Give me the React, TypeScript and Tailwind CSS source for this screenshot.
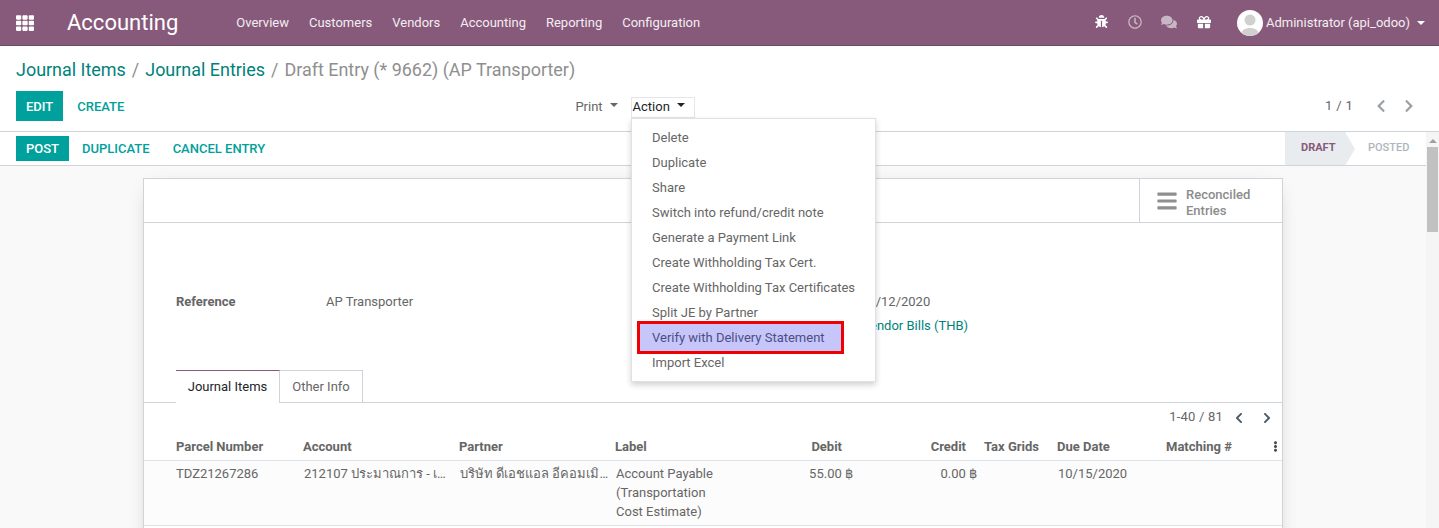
import { FaBars, FaBug, FaChevronLeft, FaChevronRight, FaComments, FaEllipsisV, FaGift, FaRegClock, FaTh } from 'react-icons/fa'

const navLinks = ['Overview', 'Customers', 'Vendors', 'Accounting', 'Reporting', 'Configuration']

const actions = [
  'Delete',
  'Duplicate',
  'Share',
  'Switch into refund/credit note',
  'Generate a Payment Link',
  'Create Withholding Tax Cert.',
  'Create Withholding Tax Certificates',
  'Split JE by Partner',
  'Verify with Delivery Statement',
  'Import Excel',
]

function Caret({ className }: { className: string }) {
  return <span className={`inline-block h-0 w-0 border-x-[4px] border-t-[4px] border-x-transparent ${className}`} />
}

function Navbar() {
  return (
    <header className="flex h-[46px] shrink-0 items-center border-b border-[#6f4a65] bg-[#875a7b] text-white">
      <FaTh className="ml-[16px] h-[18px] w-[18px]" />
      <span className="ml-[33px] text-[22px] leading-none">Accounting</span>
      <nav className="ml-[58px] flex gap-[20px] text-[13px] text-[#f3edf1]">
        {navLinks.map((link) => (
          <span key={link}>{link}</span>
        ))}
      </nav>
      <div className="ml-auto flex items-center">
        <FaBug className="-mt-[2px] h-[13px] w-[13px]" />
        <FaRegClock className="-mt-[2px] ml-[20px] h-[14px] w-[14px] text-[#c9b6c4]" />
        <FaComments className="-mt-[2px] ml-[19px] h-[16px] w-[16px] text-[#c9b6c4]" />
        <FaGift className="-mt-[2px] ml-[20px] h-[14px] w-[14px]" />
        <span className="ml-[26px] flex h-[26px] w-[26px] items-end justify-center overflow-hidden rounded-full bg-white">
          <svg viewBox="0 0 26 26" className="h-[26px] w-[26px]">
            <circle cx="13" cy="10" r="5.5" fill="#d0d0d0" />
            <path d="M4 26c0-6 4-8 9-8s9 2 9 8z" fill="#d0d0d0" />
          </svg>
        </span>
        <span className="ml-[3px] text-[13px] text-[#f3edf1]">Administrator (api_odoo)</span>
        <Caret className="ml-[7px] mr-[14px] border-t-white" />
      </div>
    </header>
  )
}

function ActionMenu() {
  return (
    <div className="absolute left-[631px] top-[118px] z-20 w-[245px] border border-[#dee2e6] bg-white py-[6px] shadow-[0_3px_6px_rgba(0,0,0,0.18)]">
      {actions.map((item) => {
        const active = item === 'Verify with Delivery Statement'
        return (
          <div key={item} className="relative h-[25px] whitespace-nowrap px-[20px] text-[13px] leading-[25px] text-[#666666]">
            {active && (
              <span className="absolute inset-y-[-4px] left-[5px] w-[207px] border-[3px] border-[#f00000] bg-[#c6c6fb]" />
            )}
            <span className={active ? 'relative text-[#4d4d84]' : 'relative'}>{item}</span>
          </div>
        )
      })}
    </div>
  )
}

function ControlPanel() {
  return (
    <section className="h-[86px] shrink-0 border-b border-[#ced4da] bg-white px-[16px]">
      <div className="flex h-[37px] items-end gap-[6px] text-[17.95px] leading-[27px] text-[#8f8f8f]">
        <span className="text-[#00827c]">Journal Items</span>
        <span>/</span>
        <span className="text-[#00827c]">Journal Entries</span>
        <span>/</span>
        <span>Draft Entry (* 9662) (AP Transporter)</span>
      </div>
      <div className="flex items-center pt-[8px] text-[13px]">
        <span className="bg-[#00a09d] px-[10px] pb-[6px] pt-[8px] font-medium leading-[16px] text-white">EDIT</span>
        <span className="ml-[14px] mt-[2px] font-medium text-[#00a09d]">CREATE</span>
        <div className="ml-[451px] mt-[2px] flex items-center text-[#666666]">
          <span>Print</span>
          <Caret className="ml-[7px] -translate-y-[2px] border-t-[#666666]" />
        </div>
        <div className="ml-[13px] mt-[2px] flex h-[21px] w-[64px] items-center border border-[#e4e7ea] pl-[1px] text-[#212529]">
          <span>Action</span>
          <Caret className="ml-[7px] -translate-y-[2px] border-t-[#212529]" />
        </div>
        <span className="ml-auto tracking-[0.3px] text-[#666666]">1 / 1</span>
        <FaChevronLeft className="ml-[21px] h-[14px] w-[14px] text-[#9aa0a6]" />
        <FaChevronRight className="ml-[14px] mr-[7px] h-[14px] w-[14px] text-[#9aa0a6]" />
      </div>
    </section>
  )
}

function StatusBar() {
  return (
    <section className="flex h-[34px] shrink-0 items-center border-b border-[#ced4da] bg-white pl-[16px] text-[13px] font-medium">
      <span className="bg-[#00a09d] px-[10px] py-[5px] leading-[15px] text-white">POST</span>
      <span className="ml-[13px] text-[#00a09d]">DUPLICATE</span>
      <span className="ml-[23px] text-[#00a09d]">CANCEL ENTRY</span>
      <div className="ml-auto flex h-full items-center text-[11px]">
        <div className="relative flex h-full w-[61px] items-center bg-[#e9ecef] pl-[16px] text-[#875a7b]">
          <span className="font-bold">DRAFT</span>
          <span className="absolute left-[60px] top-0 h-0 w-0 border-y-[17px] border-l-[10px] border-y-transparent border-l-[#e9ecef]" />
        </div>
        <span className="w-[80px] pl-[22px] text-[#adb5bd]">POSTED</span>
      </div>
    </section>
  )
}

const thClass = 'border-b border-[#dee2e6] pb-[3px] text-[13px] font-bold text-[#666666]'

function JournalTable() {
  return (
    <table className="w-full table-fixed border-collapse text-[13px] text-[#666666]">
      <colgroup>
        <col className="w-[159px]" />
        <col className="w-[156px]" />
        <col className="w-[156px]" />
        <col className="w-[150px]" />
        <col className="w-[77px]" />
        <col className="w-[124px]" />
        <col className="w-[91px]" />
        <col className="w-[109px]" />
        <col className="w-[104px]" />
        <col />
      </colgroup>
      <thead>
        <tr>
          <th className={`${thClass} pl-[32px] text-left`}>Parcel Number</th>
          <th className={`${thClass} text-left`}>Account</th>
          <th className={`${thClass} text-left`}>Partner</th>
          <th className={`${thClass} text-left`}>Label</th>
          <th className={`${thClass} text-right`}>Debit</th>
          <th className={`${thClass} text-right`}>Credit</th>
          <th className={`${thClass} pl-[18px] text-left`}>Tax Grids</th>
          <th className={`${thClass} text-left`}>Due Date</th>
          <th className={`${thClass} text-left`}>Matching #</th>
          <th className={thClass}>
            <FaEllipsisV className="h-[11px] w-[11px] text-[#4c4c4c]" />
          </th>
        </tr>
      </thead>
      <tbody>
        <tr className="h-[65px] border-b border-[#dee2e6] bg-[#fcfcfc] align-top leading-[19px]">
          <td className="pl-[32px] pt-[3px]">TDZ21267286</td>
          <td className="truncate pl-[1px] pr-[12px] pt-[3px]">212107 ประมาณการ - เจ้าหนี้</td>
          <td className="truncate pl-[1px] pr-[3px] pt-[3px]">บริษัท ดีเอชแอล อีคอมเมิร์ซ</td>
          <td className="pl-[1px] pt-[3px]">
            Account Payable
            <br />
            (Transportation
            <br />
            Cost Estimate)
          </td>
          <td className="pt-[3px] text-right">
            <span className="-mr-[11px] inline-block">55.00 ฿</span>
          </td>
          <td className="pt-[3px] text-right">
            <span className="-mr-[11px] inline-block">0.00 ฿</span>
          </td>
          <td />
          <td className="pl-[1px] pt-[3px]">10/15/2020</td>
          <td />
          <td />
        </tr>
      </tbody>
    </table>
  )
}

function FormSheet() {
  return (
    <div className="ml-[143px] mt-[12px] w-[1140px] border border-[#ced4da] bg-white pb-[40px] shadow-[0_5px_20px_-10px_rgba(0,0,0,0.35)]">
      <div className="flex h-[44px] justify-end border-b border-[#ced4da]">
        <div className="flex w-[143px] items-center border-l border-[#ced4da] pl-[17px] text-[13px] leading-[16px] text-[#8c8c8c]">
          <FaBars className="h-[22px] w-[20px] text-[#8f8f8f]" />
          <span className="ml-[9px] mt-[4px] font-medium">
            Reconciled
            <br />
            Entries
          </span>
        </div>
      </div>

      <div className="h-[147px] text-[13px] text-[#666666]">
        <div className="flex pl-[32px] pt-[69px]">
          <span className="w-[150px] font-bold">Reference</span>
          <span>AP Transporter</span>
          <div className="ml-[449px] flex flex-col gap-[5px] leading-[19px]">
            <span className="-ml-px">10/12/2020</span>
            <span className="text-[#00827c]">Vendor Bills (THB)</span>
          </div>
        </div>
      </div>

      <div className="flex h-[33px] items-end border-b border-[#ced4da] pl-[32px] text-[13px]">
        <span className="-mb-px flex h-[33px] w-[104px] items-center justify-center border-t border-t-[#875a7b] border-r border-r-[#ced4da] bg-white text-[#212529]">
          Journal Items
        </span>
        <span className="-mb-px flex h-[33px] w-[83px] items-center justify-center border-r border-t border-[#ced4da] text-[#666666]">
          Other Info
        </span>
      </div>

      <div className="flex h-[28px] items-center justify-end text-[13px] text-[#666666]">
        <span className="tracking-[0.2px]">1-40 / 81</span>
        <FaChevronLeft className="ml-[10px] mt-[2px] h-[12px] w-[12px] text-[#4c5a66]" />
        <FaChevronRight className="ml-[16px] mr-[9px] mt-[2px] h-[12px] w-[12px] text-[#4c5a66]" />
      </div>

      <div className="pt-[6px]">
        <JournalTable />
      </div>
    </div>
  )
}

export default function App() {
  return (
    <div className="relative flex h-[528px] flex-col overflow-hidden bg-white font-['Roboto','Noto_Sans',sans-serif]">
      <Navbar />
      <ControlPanel />
      <ActionMenu />
      <div className="flex min-h-0 flex-1">
        <div className="flex min-w-0 flex-1 flex-col">
          <StatusBar />
          <main className="min-h-0 flex-1 overflow-hidden bg-[#f9f9f9]">
            <FormSheet />
          </main>
        </div>
        <div className="flex w-[13px] shrink-0 flex-col items-center bg-[#f5f5f5]">
          <span className="mt-[7px] h-0 w-0 border-x-[4px] border-b-[4px] border-x-transparent border-b-[#a0a0a0]" />
          <div className="mt-[4px] h-[85px] w-[11px] bg-[#c1c1c1]" />
        </div>
      </div>
    </div>
  )
}
